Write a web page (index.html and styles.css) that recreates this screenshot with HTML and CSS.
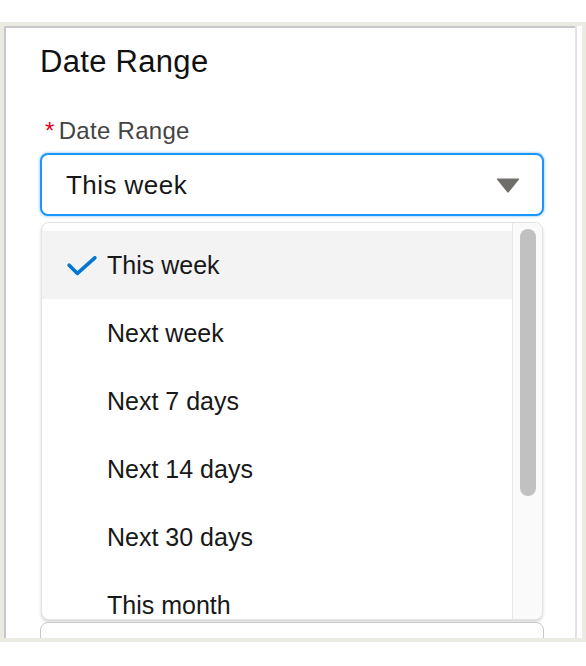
FILE: index.html
```html
<!DOCTYPE html>
<html lang="en">
<head>
<meta charset="utf-8">
<title>Date Range</title>
<link rel="stylesheet" href="styles.css">
</head>
<body>
<div class="frame">
  <div class="panel">
    <div class="content">
      <h2 class="title">Date Range</h2>
      <label class="label"><abbr class="req" title="required">*</abbr>Date Range</label>
      <div class="combobox">
        <span class="value">This week</span>
        <svg class="caret" width="24" height="15" viewBox="0 0 24 15" aria-hidden="true">
          <path d="M1.5 0.5 H22.5 Q23.8 0.5 23 1.6 L12.9 14 Q12 15 11.1 14 L1 1.6 Q0.2 0.5 1.5 0.5 Z" fill="#706e6b"/>
        </svg>
      </div>
      <div class="dropdown">
        <ul class="options">
          <li class="option selected">
            <svg class="check" width="30" height="20" viewBox="0 0 30 20" aria-hidden="true">
              <path d="M2.2 9.2 L10.4 17.4 L27.8 1.8" fill="none" stroke="#0176d3" stroke-width="3.6" stroke-linecap="round" stroke-linejoin="round"/>
            </svg>
            <span>This week</span>
          </li>
          <li class="option"><span class="slot"></span><span>Next week</span></li>
          <li class="option"><span class="slot"></span><span>Next 7 days</span></li>
          <li class="option"><span class="slot"></span><span>Next 14 days</span></li>
          <li class="option"><span class="slot"></span><span>Next 30 days</span></li>
          <li class="option"><span class="slot"></span><span>This month</span></li>
        </ul>
        <div class="track"><div class="thumb"></div></div>
      </div>
      <div class="next-field"></div>
    </div>
    <div class="gutter"></div>
  </div>
</div>
</body>
</html>
```

FILE: styles.css
```css
html, body {
  margin: 0;
  padding: 0;
  background: #ffffff;
}

body {
  font-family: "Liberation Sans", Arial, sans-serif;
  color: #181818;
}

.frame {
  margin-top: 22px;
  height: 620px;
  box-sizing: border-box;
  background: #ebebe4;
  padding: 4px 4px 4px 4px;
}

.panel {
  height: 100%;
  box-sizing: border-box;
  display: flex;
  background: #ffffff;
  border-left: 2px solid #c8c8c8;
  overflow: hidden;
}

.content {
  flex: 1;
  min-width: 0;
  border-top: 2px solid #c8c8c8;
  padding: 16px 0 0 34px;
  overflow: hidden;
}

.gutter {
  width: 5px;
  border-left: 2px solid #e2e2e8;
  background: #ffffff;
}

.title {
  margin: 0;
  font-size: 31px;
  line-height: 36px;
  font-weight: 400;
  letter-spacing: 0.3px;
  color: #111111;
}

.label {
  display: block;
  margin-top: 37px;
  font-size: 24px;
  line-height: 28px;
  letter-spacing: 0.3px;
  color: #444444;
}

.req {
  text-decoration: none;
  border: 0;
  color: #ea001e;
  margin-left: 5px;
  margin-right: 4px;
}

.combobox {
  margin-top: 8px;
  width: 504px;
  height: 63px;
  box-sizing: border-box;
  border: 2px solid #1b96ff;
  border-radius: 8px;
  box-shadow: 0 0 3px rgba(1, 118, 211, 0.55);
  display: flex;
  align-items: center;
  justify-content: space-between;
  padding: 2px 22px 0 24px;
  background: #ffffff;
}

.value {
  font-size: 26px;
  line-height: 59px;
  letter-spacing: 0.45px;
  color: #181818;
}

.caret {
  display: block;
  margin-bottom: 1px;
}

.dropdown {
  margin-top: 6px;
  margin-left: 1px;
  width: 502px;
  height: 398px;
  box-sizing: border-box;
  border: 1px solid #e3e3e3;
  border-radius: 8px;
  box-shadow: 0 2px 3px rgba(0, 0, 0, 0.16);
  display: flex;
  overflow: hidden;
  background: #ffffff;
}

.options {
  flex: 1;
  margin: 0;
  padding: 8px 0 0 0;
  list-style: none;
  overflow: hidden;
}

.option {
  height: 68px;
  display: flex;
  align-items: center;
  gap: 10px;
  padding-left: 25px;
  font-size: 25px;
  line-height: 68px;
  color: #181818;
}

.option.selected {
  background: #f3f3f3;
}

.check {
  display: block;
  flex: none;
  margin-top: 1px;
}

.slot {
  width: 30px;
  flex: none;
}

.track {
  width: 30px;
  box-sizing: border-box;
  border-left: 1px solid #e8e8e8;
  background: #fafafa;
  padding: 6px 6px 0 7px;
}

.thumb {
  height: 267px;
  border-radius: 8px;
  background: #c1c1c1;
}

.next-field {
  margin-top: 2px;
  width: 504px;
  height: 40px;
  box-sizing: border-box;
  border: 1px solid #c9c9c9;
  border-radius: 8px;
  background: #ffffff;
}
```
